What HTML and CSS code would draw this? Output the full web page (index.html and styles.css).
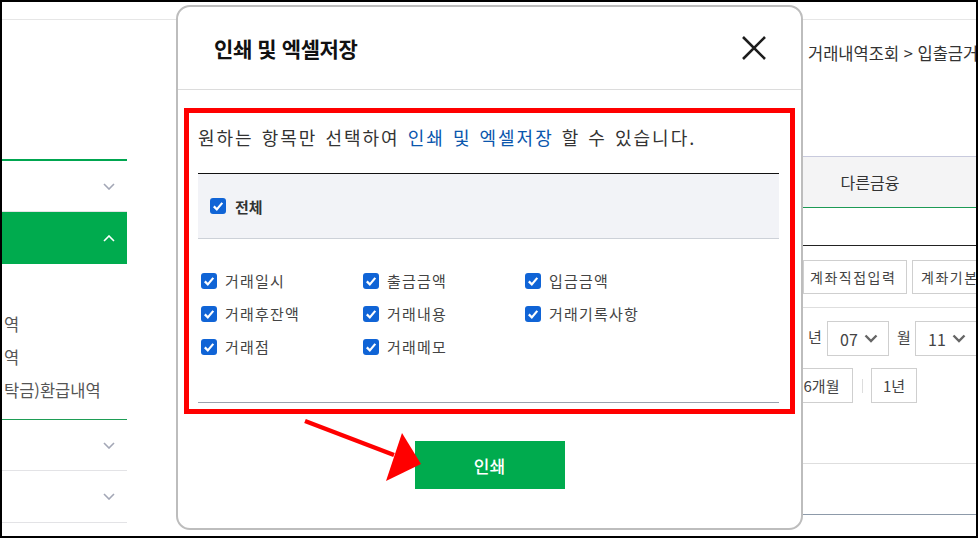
FILE: index.html
```html
<!DOCTYPE html>
<html lang="ko">
<head>
<meta charset="utf-8">
<title>인쇄 및 엑셀저장</title>
<link rel="stylesheet" href="styles.css">
</head>
<body>
<div class="frame">
  <div class="topbar"></div>
  <div class="page">
    <aside class="sidebar">
      <div class="side-row first">
        <svg class="chev" width="12" height="7" viewBox="0 0 12 7"><path d="M1 1 L6 6 L11 1" fill="none" stroke="#a3a7b6" stroke-width="1.6"/></svg>
      </div>
      <div class="side-row active">
        <svg class="chev" width="12" height="7" viewBox="0 0 12 7"><path d="M1 6 L6 1 L11 6" fill="none" stroke="#ffffff" stroke-width="1.6"/></svg>
      </div>
      <ul class="submenu">
        <li>역</li>
        <li>역</li>
        <li>탁금)환급내역</li>
      </ul>
      <div class="side-row green-top">
        <svg class="chev" width="12" height="7" viewBox="0 0 12 7"><path d="M1 1 L6 6 L11 1" fill="none" stroke="#a3a7b6" stroke-width="1.6"/></svg>
      </div>
      <div class="side-row">
        <svg class="chev" width="12" height="7" viewBox="0 0 12 7"><path d="M1 1 L6 6 L11 1" fill="none" stroke="#a3a7b6" stroke-width="1.6"/></svg>
      </div>
    </aside>

    <main class="main">
      <div class="breadcrumb">거래내역조회 &gt; 입출금거</div>
      <div class="tabs">
        <div class="tab">다른금융</div>
        <div class="tab"></div>
      </div>
      <div class="rule-dark"></div>
      <div class="btn-row">
        <span class="obtn wide">계좌직접입력</span>
        <span class="obtn">계좌기본</span>
      </div>
      <div class="rule-light"></div>
      <div class="date-row">
        <span class="unit">년</span>
        <span class="select">07 <svg width="14" height="9" viewBox="0 0 14 9"><path d="M1.5 1.5 L7 7 L12.5 1.5" fill="none" stroke="#666" stroke-width="2.4"/></svg></span>
        <span class="unit gap">월</span>
        <span class="select">11 <svg width="14" height="9" viewBox="0 0 14 9"><path d="M1.5 1.5 L7 7 L12.5 1.5" fill="none" stroke="#666" stroke-width="2.4"/></svg></span>
      </div>
      <div class="period-row">
        <span class="pbtn six">6개월</span>
        <span class="sep"></span>
        <span class="pbtn one">1년</span>
      </div>
      <div class="rule-light low"></div>
      <div class="rule-blue"></div>
    </main>
  </div>

  <div class="modal">
    <div class="modal-head">
      <h2 class="modal-title">인쇄 및 엑셀저장</h2>
      <svg class="close" width="26" height="26" viewBox="0 0 26 26"><path d="M2 2 L24 24 M24 2 L2 24" stroke="#1e1e1e" stroke-width="2.6" fill="none"/></svg>
    </div>
    <div class="modal-body">
      <div class="redbox">
        <p class="desc">원하는 항목만 선택하여 <span class="blue">인쇄 및 엑셀저장</span> 할 수 있습니다.</p>
        <div class="all-band">
          <label class="chk all"><span class="cb"><svg width="16" height="16" viewBox="0 0 16 16"><path d="M3.8 8.4 L6.8 11.4 L12.3 4.9" fill="none" stroke="#fff" stroke-width="2.2"/></svg></span>전체</label>
        </div>
        <div class="grid">
          <label class="chk"><span class="cb"><svg width="16" height="16" viewBox="0 0 16 16"><path d="M3.8 8.4 L6.8 11.4 L12.3 4.9" fill="none" stroke="#fff" stroke-width="2.2"/></svg></span>거래일시</label>
          <label class="chk"><span class="cb"><svg width="16" height="16" viewBox="0 0 16 16"><path d="M3.8 8.4 L6.8 11.4 L12.3 4.9" fill="none" stroke="#fff" stroke-width="2.2"/></svg></span>출금금액</label>
          <label class="chk"><span class="cb"><svg width="16" height="16" viewBox="0 0 16 16"><path d="M3.8 8.4 L6.8 11.4 L12.3 4.9" fill="none" stroke="#fff" stroke-width="2.2"/></svg></span>입금금액</label>
          <label class="chk"><span class="cb"><svg width="16" height="16" viewBox="0 0 16 16"><path d="M3.8 8.4 L6.8 11.4 L12.3 4.9" fill="none" stroke="#fff" stroke-width="2.2"/></svg></span>거래후잔액</label>
          <label class="chk"><span class="cb"><svg width="16" height="16" viewBox="0 0 16 16"><path d="M3.8 8.4 L6.8 11.4 L12.3 4.9" fill="none" stroke="#fff" stroke-width="2.2"/></svg></span>거래내용</label>
          <label class="chk"><span class="cb"><svg width="16" height="16" viewBox="0 0 16 16"><path d="M3.8 8.4 L6.8 11.4 L12.3 4.9" fill="none" stroke="#fff" stroke-width="2.2"/></svg></span>거래기록사항</label>
          <label class="chk"><span class="cb"><svg width="16" height="16" viewBox="0 0 16 16"><path d="M3.8 8.4 L6.8 11.4 L12.3 4.9" fill="none" stroke="#fff" stroke-width="2.2"/></svg></span>거래점</label>
          <label class="chk"><span class="cb"><svg width="16" height="16" viewBox="0 0 16 16"><path d="M3.8 8.4 L6.8 11.4 L12.3 4.9" fill="none" stroke="#fff" stroke-width="2.2"/></svg></span>거래메모</label>
        </div>
        <div class="bottom-rule"></div>
      </div>
      <div class="actions">
        <button class="print-btn">인쇄</button>
      </div>
    </div>
  </div>

  <svg class="arrow" width="130" height="72" viewBox="298 415 130 72">
    <path d="M305 421 L394 455" stroke="#ff0000" stroke-width="4.5" fill="none"/>
    <polygon points="402,433 421,464 386,481" fill="#ff0000"/>
  </svg>
</div>
</body>
</html>
```

FILE: styles.css
```css
* { box-sizing: border-box; }
html, body { margin: 0; padding: 0; background: #fff; }
body {
  font-family: "Noto Sans CJK KR", "Noto Sans", sans-serif;
  color: #333;
}
.frame {
  position: relative;
  width: 978px;
  height: 538px;
  border: 2px solid #000;
  overflow: hidden;
  background: #fff;
}
.topbar {
  height: 18px;
  border-bottom: 1px solid #e6e6e6;
}
.page {
  display: flex;
  height: 515px;
}

/* sidebar */
.sidebar {
  width: 125px;
  flex: none;
  padding-top: 139px;
}
.side-row {
  height: 52px;
  border-bottom: 1px solid #e3e3e6;
  display: flex;
  align-items: center;
  justify-content: flex-end;
  padding-right: 12px;
}
.side-row.first {
  border-top: 2px solid #00a650;
  height: 53px;
}
.side-row.active {
  background: #00ab4e;
  border-bottom: none;
  height: 52px;
}
.side-row.green-top {
  border-top: 1px solid #1e9d55;
}
.chev { display: block; }
.submenu {
  list-style: none;
  margin: 0;
  padding: 44px 0 12px 2px;
}
.submenu li {
  font-size: 16.5px;
  line-height: 33px;
  color: #555;
  white-space: nowrap;
}

/* main background content */
.main {
  margin-left: 663px;
  width: 186px;
  flex: none;
  overflow: hidden;
}
.breadcrumb {
  padding: 22px 0 0 18px;
  font-size: 16.5px;
  line-height: 22px;
  color: #333;
  white-space: nowrap;
}
.tabs {
  margin-top: 92px;
  display: flex;
  border-top: 1px solid #c8cadd;
  border-bottom: 1px solid #1d9a55;
  background: #f4f4f5;
}
.tab {
  width: 160px;
  flex: none;
  height: 50px;
  line-height: 50px;
  text-align: center;
  font-size: 16px;
  color: #333;
}
.rule-dark {
  margin-top: 37px;
  height: 1px;
  background: #222;
}
.btn-row {
  margin-top: 14px;
  padding-left: 13px;
  display: flex;
  gap: 5px;
  white-space: nowrap;
}
.obtn {
  flex: none;
  height: 34px;
  line-height: 32px;
  border: 1px solid #cfcfcf;
  padding: 0 8px;
  font-size: 14px;
  letter-spacing: 1.5px;
  color: #444;
}
.obtn.wide { width: 104px; padding: 0 6px; }
.rule-light {
  margin-top: 13px;
  height: 1px;
  background: #dedede;
}
.rule-light.low { margin-top: 60px; }
.date-row {
  margin-top: 13px;
  padding-left: 18px;
  display: flex;
  align-items: center;
  white-space: nowrap;
}
.unit {
  font-size: 15px;
  color: #444;
  width: 19px;
  flex: none;
  margin-top: -4px;
}
.unit.gap { margin-left: 8px; width: 18px; }
.select {
  flex: none;
  width: 62px;
  height: 35px;
  border: 1px solid #cfcfcf;
  display: flex;
  align-items: center;
  padding-left: 12px;
  gap: 6px;
  font-size: 16px;
  color: #444;
}
.period-row {
  margin-top: 12px;
  display: flex;
  align-items: center;
}
.pbtn {
  flex: none;
  height: 35px;
  line-height: 33px;
  border: 1px solid #cfcfcf;
  text-align: center;
  font-size: 15px;
  color: #444;
}
.pbtn.six { width: 63px; }
.pbtn.one { width: 46px; }
.sep {
  width: 1px;
  height: 14px;
  background: #ddd;
  margin: 0 8px 0 9px;
}
.rule-blue {
  margin-top: 50px;
  height: 1px;
  background: #8d9aa9;
}

/* modal */
.modal {
  position: absolute;
  left: 174px;
  top: 3px;
  width: 627px;
  height: 525px;
  background: #fff;
  border: 2px solid #bdbdbd;
  border-radius: 14px;
  overflow: hidden;
}
.modal-head {
  height: 83px;
  border-bottom: 1px solid #dcdcdc;
  display: flex;
  align-items: center;
  justify-content: space-between;
  padding: 0 34px 0 36px;
}
.modal-title {
  margin: 0;
  font-size: 21px;
  font-weight: 700;
  letter-spacing: -0.4px;
  color: #111;
}
.close { display: block; }
.modal-body {
  padding: 18px 6px 0;
}
.redbox {
  border: 5px solid #ff0000;
  padding: 13px 11px 6px 9px;
}
.desc {
  margin: 0;
  font-size: 18px;
  line-height: 22px;
  letter-spacing: 2px;
  word-spacing: 1px;
  color: #333;
}
.blue { color: #0a56ad; }
.all-band {
  margin-top: 25px;
  height: 66px;
  border-top: 1px solid #111;
  border-bottom: 1px solid #cdd1d8;
  background: #f2f3f7;
  display: flex;
  align-items: center;
  padding-left: 12px;
}
.chk {
  display: flex;
  align-items: center;
  gap: 8px;
  font-size: 15px;
  letter-spacing: 1.2px;
  color: #444;
  white-space: nowrap;
}
.chk.all {
  font-size: 15px;
  font-weight: 700;
  letter-spacing: 0;
  color: #333;
  gap: 9px;
}
.cb {
  width: 16px;
  height: 16px;
  border-radius: 3px;
  background: #1064d6;
  display: flex;
  flex: none;
}
.cb svg { display: block; }
.grid {
  display: grid;
  grid-template-columns: 162px 162px 162px;
  grid-auto-rows: 33px;
  padding: 25px 0 39px 3px;
}
.bottom-rule {
  height: 1px;
  background: #9ba2ae;
}
.actions {
  display: flex;
  justify-content: center;
  margin-top: 27px;
}
.print-btn {
  width: 150px;
  height: 48px;
  border: none;
  background: #00ab4e;
  color: #fff;
  font-family: "Noto Sans CJK KR", "Noto Sans", sans-serif;
  font-size: 17px;
  font-weight: 500;
  padding: 0;
}

.arrow {
  position: absolute;
  left: 296px;
  top: 413px;
}
```
